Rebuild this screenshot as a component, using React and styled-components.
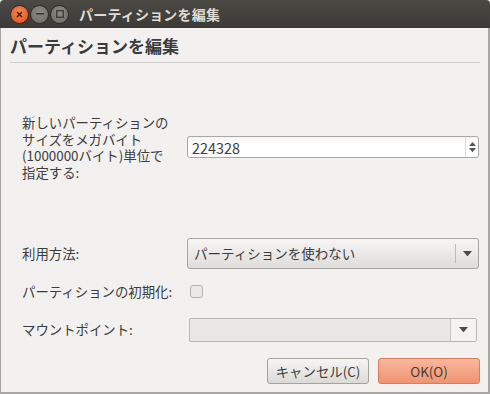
import React from 'react';
import styled, {createGlobalStyle} from 'styled-components';

const Global = createGlobalStyle`
	html, body {
		margin: 0;
		padding: 0;
		background: #f2f1f0;
	}
	body {
		font-family: "Noto Sans CJK JP", "DejaVu Sans", sans-serif;
		color: #3c3c3c;
	}
`;

const Window = styled.div`
	width: 490px;
	height: 394px;
	display: flex;
	flex-direction: column;
	background: #f2f1f0;
	overflow: hidden;
`;

const TitleBar = styled.div`
	height: 28px;
	flex: 0 0 28px;
	display: flex;
	align-items: center;
	padding-left: 10px;
	background: linear-gradient(#4a4944, #3c3b37);
	border-radius: 4px 4px 0 0;
`;

const Controls = styled.div`
	display: flex;
	gap: 1px;
	margin-right: 10px;
`;

const WinButton = styled.div`
	width: 17px;
	height: 17px;
	border-radius: 50%;
	display: flex;
	align-items: center;
	justify-content: center;
	border: 1px solid #2e2d2a;
	background: ${(p) =>
		p.close
			? 'radial-gradient(circle at 50% 35%, #f7854f, #e0501f)'
			: 'radial-gradient(circle at 50% 35%, #8a8984, #6b6a66)'};
`;

const TitleText = styled.div`
	color: #dfdbd2;
	font-size: 14px;
	font-weight: bold;
	letter-spacing: 0.2px;
`;

const Body = styled.div`
	flex: 1;
	display: flex;
	flex-direction: column;
	border-left: 1px solid #a8a7a4;
	border-right: 2px solid #a8a7a4;
	border-bottom: 2px solid #a8a7a4;
	padding: 0 8px 0 9px;
`;

const Heading = styled.div`
	font-size: 17px;
	font-weight: bold;
	line-height: 22px;
	padding-top: 7px;
	color: #3c3c3c;
`;

const Separator = styled.div`
	height: 1px;
	margin-top: 5px;
	background: #cfcdca;
`;

const Form = styled.div`
	display: grid;
	grid-template-columns: 165px 292px;
	padding-left: 12px;
	align-items: center;
`;

const Label = styled.div`
	font-size: 13.4px;
	line-height: 16.7px;
	color: #3c3c3c;
	white-space: nowrap;
	margin-top: ${(p) => p.top || 0}px;
`;

const Field = styled.div`
	margin-top: ${(p) => p.top || 0}px;
	display: flex;
`;

const SpinBox = styled.div`
	width: 292px;
	height: 22px;
	box-sizing: border-box;
	border: 1px solid #a9a7a4;
	border-radius: 3px;
	background: linear-gradient(#f6f6f6, #ffffff 40%);
	display: flex;
	align-items: center;
`;

const SpinText = styled.div`
	flex: 1;
	padding-left: 4px;
	font-size: 14.4px;
	color: #3c3c3c;
`;

const SpinArrows = styled.div`
	width: 12px;
	height: 20px;
	border-left: 1px solid #e0dedb;
	display: flex;
	flex-direction: column;
	align-items: center;
	justify-content: center;
	gap: 2px;
`;

const Combo = styled.div`
	width: 292px;
	height: 31px;
	box-sizing: border-box;
	border: 1px solid #a6a4a1;
	border-radius: 3px;
	background: linear-gradient(#f7f6f5, #dfddda);
	display: flex;
	align-items: center;
	font-size: 13.5px;
	color: #3c3c3c;
`;

const ComboText = styled.div`
	flex: 1;
	padding-left: 6px;
`;

const ComboArrow = styled.div`
	width: 22px;
	height: 19px;
	border-left: 1px solid #bdbbb8;
	display: flex;
	align-items: center;
	justify-content: center;
`;

const Check = styled.div`
	width: 13px;
	height: 13px;
	margin-left: 3px;
	box-sizing: border-box;
	border: 1px solid #b5b3b0;
	border-radius: 3px;
	background: #ebe9e7;
`;

const ComboEntry = styled.div`
	width: 288px;
	height: 24px;
	margin-left: 2px;
	box-sizing: border-box;
	border: 1px solid #b9b7b4;
	border-radius: 2px;
	background: #e8e7e6;
	display: flex;
`;

const EntryPart = styled.div`
	flex: 1;
`;

const EntryButton = styled.div`
	width: 25px;
	border-left: 1px solid #c7c5c2;
	background: #f4f3f2;
	display: flex;
	align-items: center;
	justify-content: center;
`;

const ButtonRow = styled.div`
	display: flex;
	justify-content: flex-end;
	gap: 9px;
	margin-top: 16px;
`;

const Button = styled.div`
	width: 102px;
	height: 26px;
	box-sizing: border-box;
	border-radius: 3px;
	display: flex;
	align-items: center;
	justify-content: center;
	font-size: 13.4px;
	color: ${(p) => (p.primary ? '#4b3a33' : '#3c3c3c')};
	border: 1px solid ${(p) => (p.primary ? '#d97b5c' : '#a4a29f')};
	background: ${(p) =>
		p.primary
			? 'linear-gradient(#f9b79c, #ef9472)'
			: 'linear-gradient(#f7f6f5, #dcdad7)'};
`;

const Tri = ({down = true, size = 7, color = '#4c4c4c'}) => (
	<svg width={size} height={size * 0.6} viewBox="0 0 10 6">
		<path d={down ? 'M0 0 L10 0 L5 6 Z' : 'M0 6 L10 6 L5 0 Z'} fill={color} />
	</svg>
);

const App = () => {
	return (
		<Window>
			<Global />
			<TitleBar>
				<Controls>
					<WinButton close>
						<svg width="7" height="7" viewBox="0 0 7 7">
							<path d="M1 1 L6 6 M6 1 L1 6" stroke="#3a1a0c" strokeWidth="1.4" />
						</svg>
					</WinButton>
					<WinButton>
						<svg width="8" height="2" viewBox="0 0 8 2">
							<rect width="8" height="1.6" fill="#3a3935" />
						</svg>
					</WinButton>
					<WinButton>
						<svg width="8" height="8" viewBox="0 0 8 8">
							<rect x="0.7" y="0.7" width="6.6" height="6.6" fill="none" stroke="#3a3935" strokeWidth="1.3" />
						</svg>
					</WinButton>
				</Controls>
				<TitleText>パーティションを編集</TitleText>
			</TitleBar>
			<Body>
				<Heading>パーティションを編集</Heading>
				<Separator />
				<Form>
					<Label top={51}>
						新しいパーティションの
						<br />
						サイズをメガバイト
						<br />
						(1000000バイト)単位で
						<br />
						指定する:
					</Label>
					<Field top={51}>
						<SpinBox>
							<SpinText>224328</SpinText>
							<SpinArrows>
								<Tri down={false} size={7} color="#555" />
								<Tri size={7} color="#555" />
							</SpinArrows>
						</SpinBox>
					</Field>

					<Label top={57}>利用方法:</Label>
					<Field top={57}>
						<Combo>
							<ComboText>パーティションを使わない</ComboText>
							<ComboArrow>
								<Tri size={9} />
							</ComboArrow>
						</Combo>
					</Field>

					<Label top={14}>パーティションの初期化:</Label>
					<Field top={14}>
						<Check />
					</Field>

					<Label top={18}>マウントポイント:</Label>
					<Field top={18}>
						<ComboEntry>
							<EntryPart />
							<EntryButton>
								<Tri size={9} />
							</EntryButton>
						</ComboEntry>
					</Field>
				</Form>
				<ButtonRow>
					<Button>キャンセル(C)</Button>
					<Button primary>OK(O)</Button>
				</ButtonRow>
			</Body>
		</Window>
	);
};

export default App;
